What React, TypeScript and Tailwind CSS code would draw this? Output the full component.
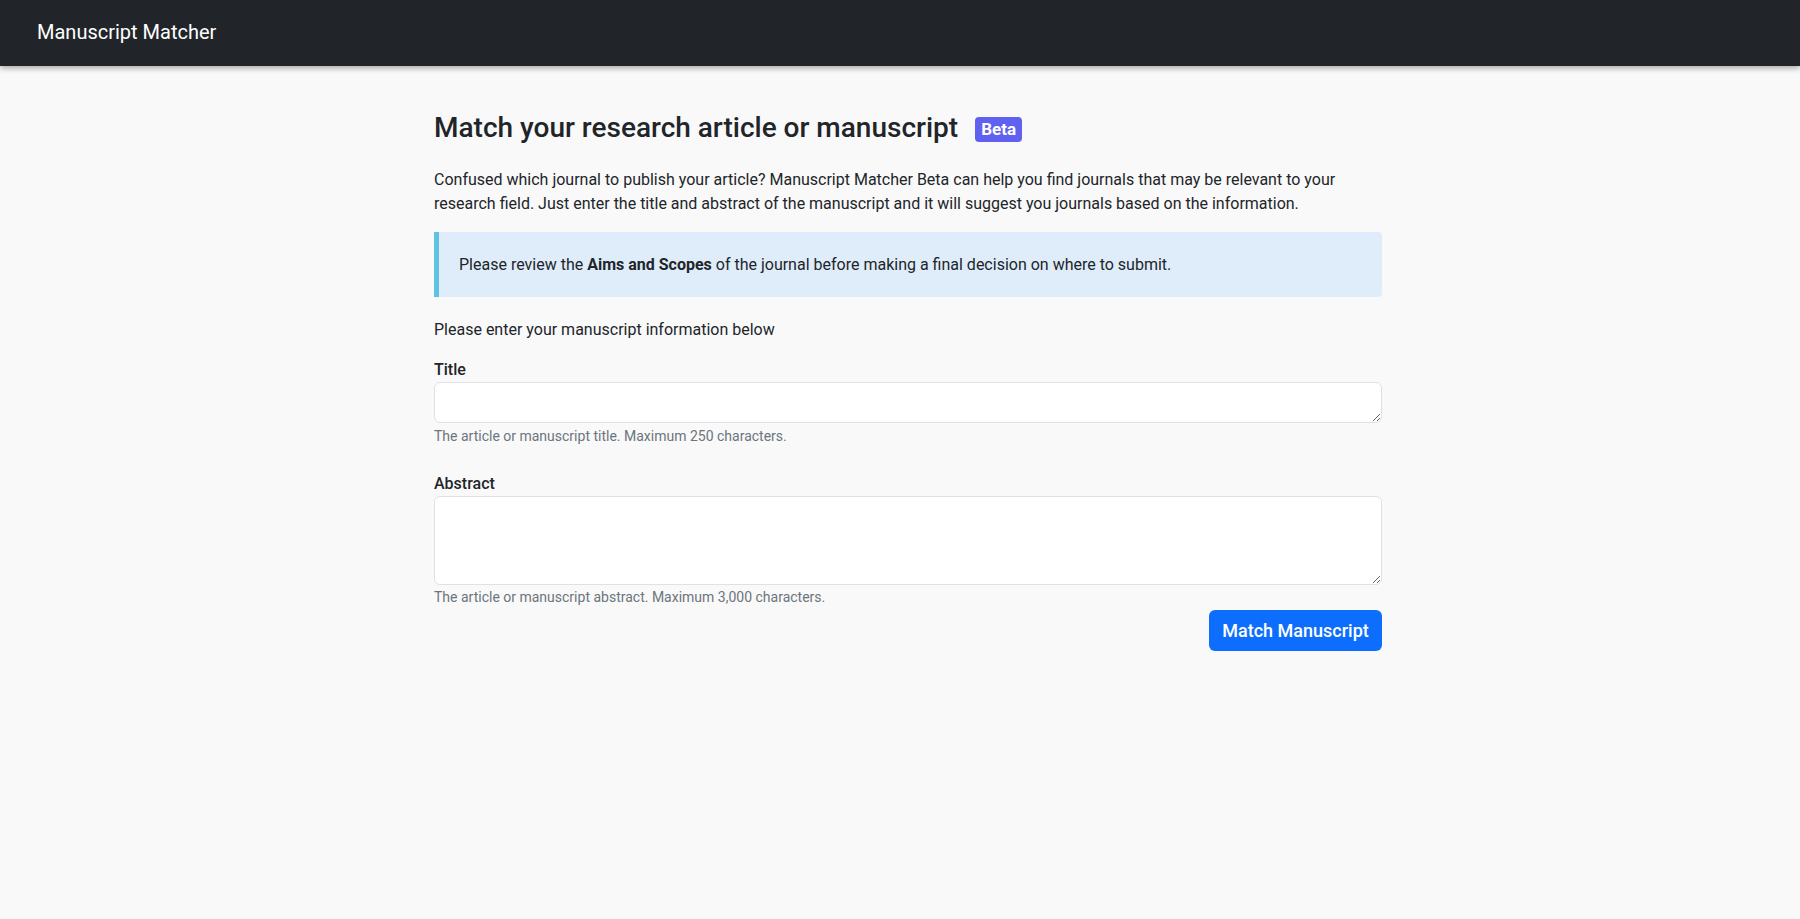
export default function App() {
  return (
    <div className="min-h-screen bg-[#f9f9f9] font-[Roboto,sans-serif] text-[#212529]">
      <nav className="h-[66px] bg-[#212529] flex items-center px-[37px] pb-[2px] shadow-[0_2px_6px_rgba(0,0,0,0.35)]">
        <span className="text-white text-[20px] leading-none">Manuscript Matcher</span>
      </nav>

      <main className="ml-[434px] w-[948px] pt-[45px]">
        <h3 className="flex items-center text-[28px] font-medium leading-[34px]">
          Match your research article or manuscript
          <span className="ml-[17px] mt-[3px] rounded-[4px] bg-[#6061f0] px-[6px] h-[25px] flex items-center text-[17px] font-bold text-white leading-none">
            Beta
          </span>
        </h3>

        <p className="mt-[23px] text-[16px] leading-[24px]">
          Confused which journal to publish your article? Manuscript Matcher Beta can help you find journals that may be
          relevant to your research field. Just enter the title and abstract of the manuscript and it will suggest you
          journals based on the information.
        </p>

        <div className="mt-[16px] h-[65px] flex items-center rounded-r-[4px] border-l-[5px] border-[#5fc2e0] bg-[#dfedfa] pl-[20px] text-[16px]">
          <span>
            Please review the <b className="font-bold">Aims and Scopes</b> of the journal before making a final decision
            on where to submit.
          </span>
        </div>

        <p className="mt-[21px] text-[16px] leading-[24px]">Please enter your manuscript information below</p>

        <form className="mt-[16px]" onSubmit={(e) => e.preventDefault()}>
          <label className="block text-[16px] font-medium leading-[24px]">Title</label>
          <textarea
            rows={1}
            className="block h-[41px] w-full resize-y rounded-[6px] border border-[#dee2e6] bg-white px-3 py-[6px] outline-none"
          />
          <div className="mt-[3px] text-[14px] leading-[21px] text-[#6c757d]">
            The article or manuscript title. Maximum 250 characters.
          </div>

          <label className="mt-[25px] block text-[16px] font-medium leading-[24px]">Abstract</label>
          <textarea
            rows={3}
            className="block h-[89px] w-full resize-y rounded-[6px] border border-[#dee2e6] bg-white px-3 py-[6px] outline-none"
          />
          <div className="mt-[2px] text-[14px] leading-[21px] text-[#6c757d]">
            The article or manuscript abstract. Maximum 3,000 characters.
          </div>

          <div className="flex justify-end">
            <button
              type="submit"
              className="mt-[2px] h-[41px] w-[173px] rounded-[6px] bg-[#0d6efd] text-[18px] font-medium text-white"
            >
              Match Manuscript
            </button>
          </div>
        </form>
      </main>
    </div>
  );
}
